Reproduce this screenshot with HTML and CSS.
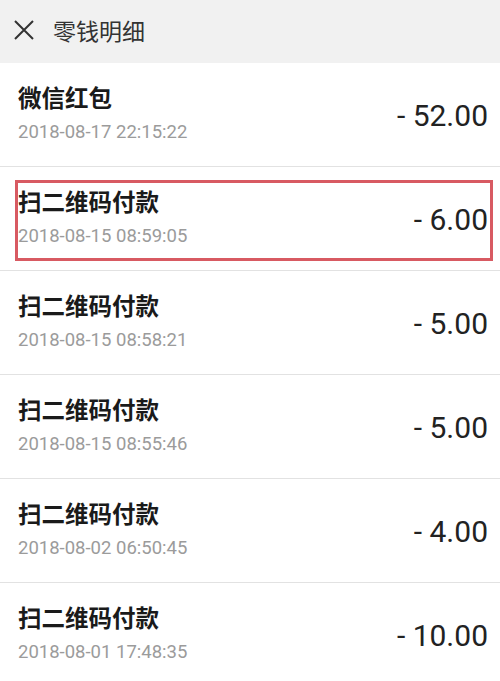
FILE: index.html
```html
<html><head>
<meta charset="utf-8">
<title>零钱明细</title>
<link rel="stylesheet" href="styles.css">
</head>
<body>
<div class="bar">
	<svg class="close" width="20" height="20" viewBox="0 0 20 20"><path d="M1 1L19 19M19 1L1 19" stroke="#333" stroke-width="2" fill="none"/></svg>
	<span class="bar-title">零钱明细</span>
</div>
<ul class="list">
	<li class="item">
		<div class="info"><div class="name">微信红包</div><div class="time">2018-08-17 22:15:22</div></div>
		<div class="money">- 52.00</div>
	</li>
	<li class="item marked">
		<div class="info"><div class="name">扫二维码付款</div><div class="time">2018-08-15 08:59:05</div></div>
		<div class="money">- 6.00</div>
	</li>
	<li class="item">
		<div class="info"><div class="name">扫二维码付款</div><div class="time">2018-08-15 08:58:21</div></div>
		<div class="money">- 5.00</div>
	</li>
	<li class="item">
		<div class="info"><div class="name">扫二维码付款</div><div class="time">2018-08-15 08:55:46</div></div>
		<div class="money">- 5.00</div>
	</li>
	<li class="item">
		<div class="info"><div class="name">扫二维码付款</div><div class="time">2018-08-02 06:50:45</div></div>
		<div class="money">- 4.00</div>
	</li>
	<li class="item">
		<div class="info"><div class="name">扫二维码付款</div><div class="time">2018-08-01 17:48:35</div></div>
		<div class="money">- 10.00</div>
	</li>
</ul>
</body></html>
```

FILE: styles.css
```css
body{margin:0;background:#fff;font-family:Roboto,"Noto Sans CJK SC",sans-serif;overflow:hidden;}
.bar{height:63px;background:#f1f1f1;display:flex;align-items:center;padding-left:14px;box-sizing:border-box;}
.close{margin-right:19px;margin-top:-4px;}
.bar-title{font-family:"Noto Sans CJK SC",sans-serif;font-size:23px;color:#333;margin-top:-4px;}
.list{list-style:none;margin:0;padding:0;}
.item{height:104px;box-sizing:border-box;border-bottom:1px solid #e2e2e2;display:flex;align-items:center;justify-content:space-between;padding:0 12px 0 18px;position:relative;}
.info{display:flex;flex-direction:column;margin-top:-4px;}
.name{font-family:"Noto Sans CJK SC",sans-serif;font-weight:bold;font-size:23.5px;line-height:28px;color:#1a1a1a;}
.time{font-size:18.5px;line-height:22px;color:#9b9b9b;margin-top:10px;}
.money{font-size:30px;color:#222;margin-top:2px;}
.marked::after{content:"";position:absolute;left:15px;right:7px;top:13px;bottom:9px;border:3px solid #d85a62;}
```
